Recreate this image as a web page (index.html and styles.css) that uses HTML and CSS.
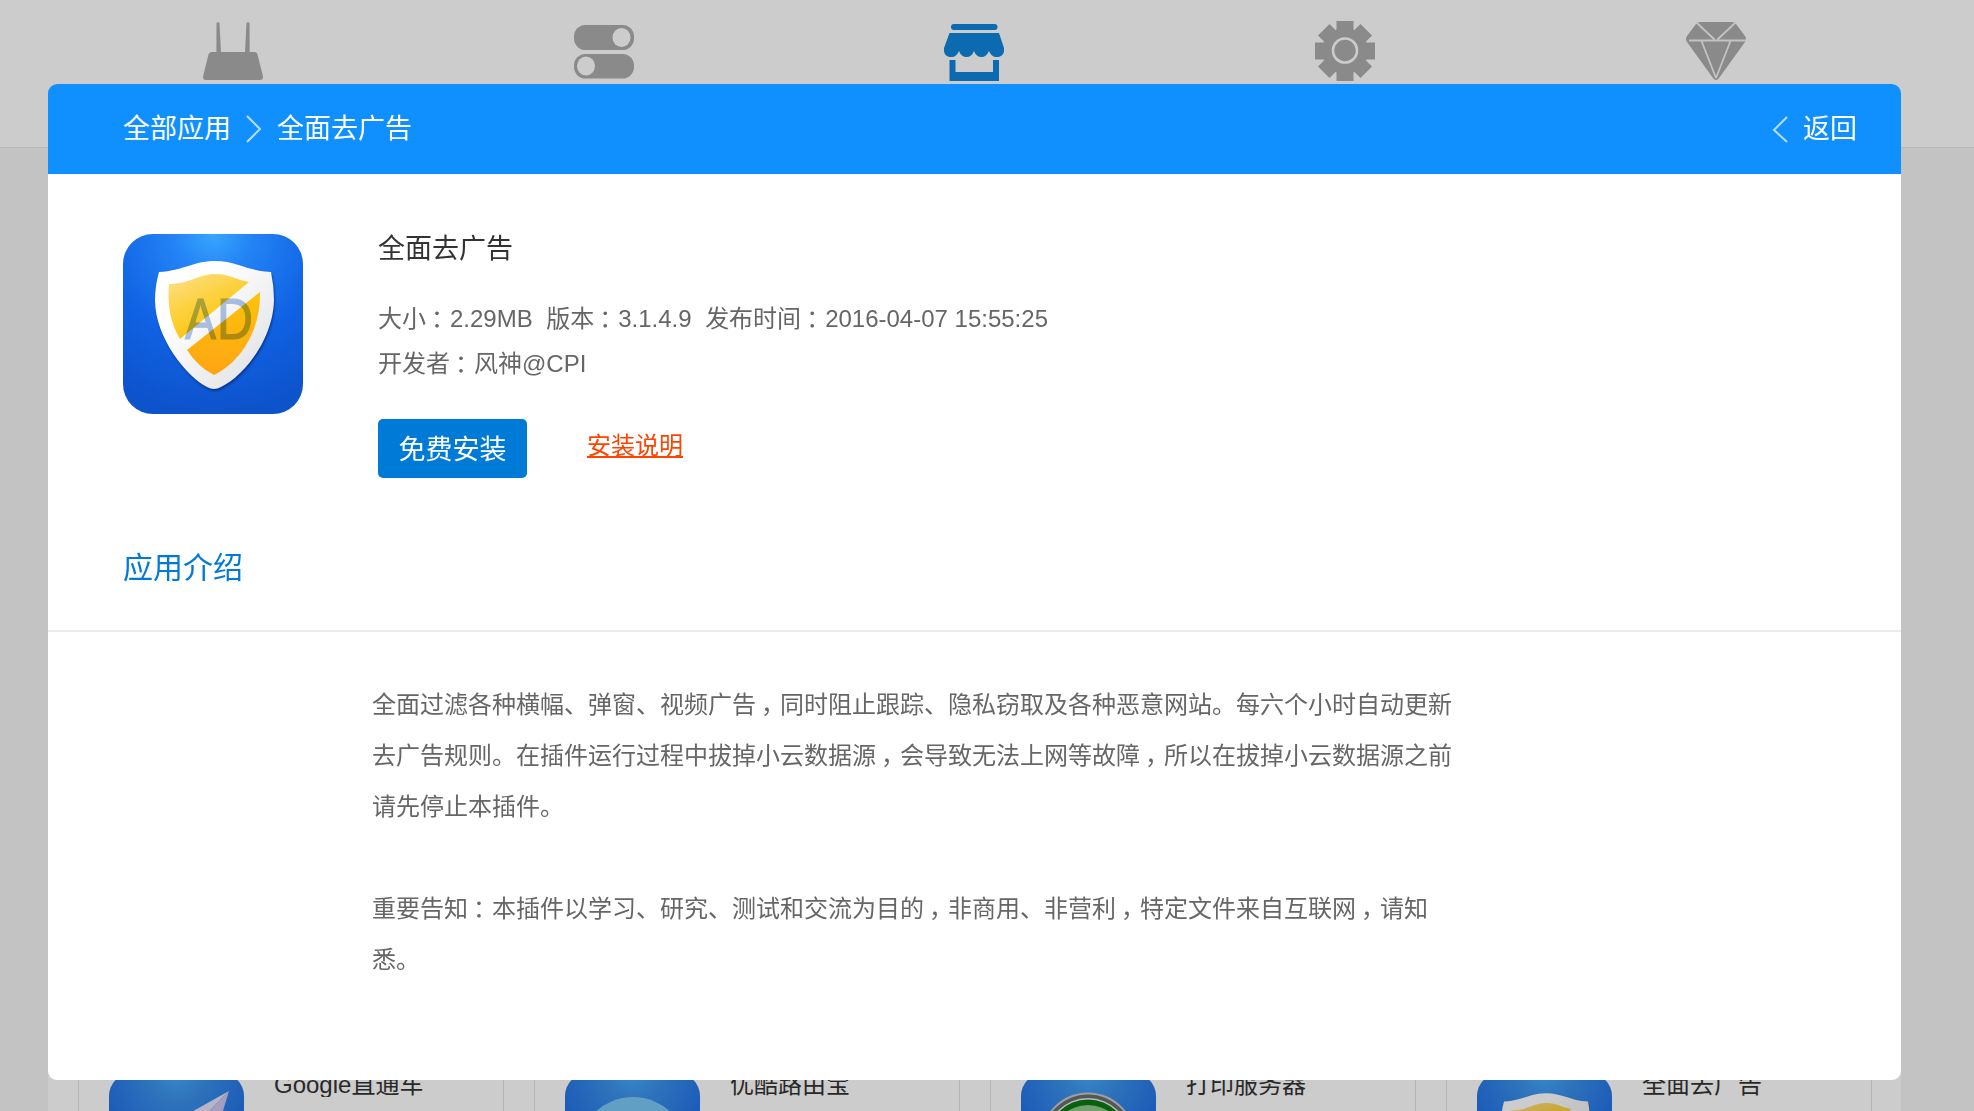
FILE: index.html
```html
<!DOCTYPE html>
<html lang="zh-CN">
<head>
  <meta charset="UTF-8" />
  <title>全面去广告</title>
  <link rel="stylesheet" href="styles.css">
</head>
<body>
  <svg width="0" height="0" class="defs">
    <defs>
      <radialGradient id="bg" cx="0.5" cy="0" r="1">
        <stop offset="0" stop-color="#38a6ff" />
        <stop offset="0.22" stop-color="#2383f5" />
        <stop offset="0.6" stop-color="#1062e4" />
        <stop offset="1" stop-color="#0d53cb" />
      </radialGradient>
      <radialGradient id="bg2" cx="0.5" cy="0" r="0.7">
        <stop offset="0" stop-color="#43aaff" />
        <stop offset="0.3" stop-color="#3b90ea" />
        <stop offset="1" stop-color="#1a68e6" />
      </radialGradient>
      <linearGradient id="white" x1="0" y1="0" x2="1" y2="1">
        <stop offset="0.3" stop-color="#fff" />
        <stop offset="1" stop-color="#dcdde0" />
      </linearGradient>
      <linearGradient id="gold1" x1="0" y1="0" x2="0.6" y2="1">
        <stop offset="0" stop-color="#fee08c" />
        <stop offset="0.5" stop-color="#fcd13c" />
        <stop offset="1" stop-color="#fcc000" />
      </linearGradient>
      <linearGradient id="gold2" x1="0" y1="0" x2="0" y2="1">
        <stop offset="0" stop-color="#fcc40a" />
        <stop offset="1" stop-color="#ffa414" />
      </linearGradient>
      <g id="shield">
        <path class="shield-edge" d="M36 38C60 37 70 27 92 27C114 27 124 37 148 38Q151 52 151 66C150 108 118 144 98 153Q91 157 84 153C64 143 32 104 32 66Q32 52 36 38Z" fill="url(#white)" />
        <path d="M46 50C66 50 76 40 92 40C107 40 113 46 126 48L57 105Q43 82 46 50Z" fill="url(#gold1)" />
        <path d="M137 58C138 98 116 129 91 141Q75 133 64 116Z" fill="url(#gold2)" />
      </g>
    </defs>
  </svg>

  <!-- 顶部导航 -->
  <div class="nav">
    <div class="nav-list">
      <a class="nav-item">
        <svg viewBox="0 0 60 60">
          <path d="M13.5 1.5h3L18 32h-4.600zM43.500 1.500h3L46.700 32h-4.700z" />
          <path d="M8.500 31h43q2.500 0 3 2.500l5.500 22q0 3.500-3 3.500H3q-3 0-3-3.500l5.500-22q.5-2.500 3-2.500z" />
        </svg>
      </a>
      <a class="nav-item">
        <svg viewBox="0 0 60 60">
          <rect x="0" y="4" width="60" height="25" rx="11.500" />
          <rect x="0" y="33" width="60" height="24.500" rx="11.500" />
          <ellipse class="hole" cx="47.500" cy="16.500" rx="9" ry="9.500" />
          <ellipse class="hole" cx="12" cy="45" rx="9" ry="9.500" />
        </svg>
      </a>
      <a class="nav-item active">
        <svg viewBox="0 0 60 60">
          <rect x="7" y="3" width="46.500" height="6" rx="3" />
          <path d="M5.500 12h49.500l5 15c1 6-3 9-7 9s-6-2-8-6c-2 4-4 6-7.500 6s-6-2-7.500-6c-1.500 4-4 6-7.500 6s-6-2-7.500-6c-2 4-4 6-8 6s-8-3-7-9z" />
          <path d="M5.500 39h6v12H49V39h6v21H5.500z" />
        </svg>
      </a>
      <a class="nav-item">
        <svg viewBox="0 0 60 60">
          <circle cx="30" cy="30" r="23" />
          <path d="M21.500 0h17v60h-17zM0 21.500h60v17H0z" />
          <path d="M14.500 3L57 45.500 45.500 57 3 14.500zM45.500 3L57 14.500 14.500 57 3 45.500z" />
          <circle class="ring" cx="30" cy="29.500" r="12" />
        </svg>
      </a>
      <a class="nav-item">
        <svg viewBox="0 0 60 60">
          <path d="M14 1h32q2 0 4 2l9 12q2 3 0 6L33 57q-3 4-6 0L1 21q-2-3 0-6L10 3q2-2 4-2z" />
          <path class="cut" d="M11 2l17.500 16.500M49 2L31.500 18.500M3 19.500h57M15.500 20L30 57M44.500 20L30 57" />
        </svg>
      </a>
    </div>
  </div>

  <!-- 应用列表 -->
  <div class="main">
    <div class="card">
      <svg class="card-icon" viewBox="0 0 135 135">
        <rect width="135" height="135" rx="23" fill="url(#bg2)" />
        <path d="M120 18L22 73l34 10z" fill="#e7e2fa" />
        <path d="M120 18L56 83l38 20z" fill="#cfc6f2" />
      </svg>
      <div class="card-name">Google直通车</div>
    </div>
    <div class="card">
      <svg class="card-icon" viewBox="0 0 135 135">
        <rect width="135" height="135" rx="23" fill="url(#bg2)" />
        <circle cx="68" cy="79" r="55" fill="#7ac9f5" />
      </svg>
      <div class="card-name">优酷路由宝</div>
    </div>
    <div class="card">
      <svg class="card-icon" viewBox="0 0 135 135">
        <rect width="135" height="135" rx="23" fill="url(#bg2)" />
        <circle cx="67" cy="67" r="47.500" fill="#c4c8cc" />
        <circle cx="67" cy="67" r="45.500" fill="#6c6c6c" />
        <circle cx="67" cy="67" r="42" fill="#e8eee8" />
        <circle cx="67" cy="67" r="40.500" fill="#0b7a12" />
        <ellipse cx="67" cy="67" rx="36" ry="35" fill="#8fc88a" />
      </svg>
      <div class="card-name">打印服务器</div>
    </div>
    <div class="card">
      <svg class="card-icon" viewBox="0 0 180 180">
        <rect width="180" height="180" rx="31" fill="url(#bg2)" />
        <use href="#shield" />
      </svg>
      <div class="card-name">全面去广告</div>
    </div>
  </div>

  <!-- 应用详情弹层 -->
  <div class="mask">
    <div class="dialog">
      <div class="dialog-head">
        <div class="crumb">
          <span>全部应用</span>
          <svg class="arrow" viewBox="0 0 16 28"><path d="M1 1l13 13L1 27" /></svg>
          <span>全面去广告</span>
        </div>
        <div class="back">
          <svg class="arrow" viewBox="0 0 16 28"><path d="M15 2L2 15l13 12" /></svg>
          <span>返回</span>
        </div>
      </div>

      <div class="app">
        <svg class="app-icon" viewBox="0 0 180 180">
          <rect width="180" height="180" rx="30" fill="url(#bg)" />
          <use href="#shield" />
          <g class="ad">
            <text x="62" y="105" textLength="31" lengthAdjust="spacingAndGlyphs">A</text>
            <text x="94" y="105" textLength="36" lengthAdjust="spacingAndGlyphs">D</text>
          </g>
        </svg>
        <div class="app-info">
          <h2>全面去广告</h2>
          <p class="meta">
            <span>大小<i>：</i>2.29MB</span>
            <span>版本<i>：</i>3.1.4.9</span>
            <span>发布时间<i>：</i>2016-04-07 15:55:25</span>
          </p>
          <p class="meta"><span>开发者<i>：</i>风神@CPI</span></p>
          <div class="actions">
            <button class="install-btn">免费安装</button>
            <a class="help" href="#">安装说明</a>
          </div>
        </div>
      </div>

      <h3 class="intro-title">应用介绍</h3>
      <div class="intro">
        <p>全面过滤各种横幅、弹窗、视频广告<i>，</i>同时阻止跟踪、隐私窃取及各种恶意网站。每六个小时自动更新去广告规则。在插件运行过程中拔掉小云数据源<i>，</i>会导致无法上网等故障<i>，</i>所以在拔掉小云数据源之前请先停止本插件。</p>
        <p>重要告知<i>：</i>本插件以学习、研究、测试和交流为目的<i>，</i>非商用、非营利<i>，</i>特定文件来自互联网<i>，</i>请知悉。</p>
      </div>
    </div>
  </div>
</body>
</html>
```
FILE: styles.css
```css
* {
  box-sizing: border-box;
  margin: 0;
  padding: 0;
}

body {
  font-family: "Liberation Sans", "Noto Sans CJK SC", sans-serif;
  font-size: 24px;
  color: #666;
  background: #f4f4f4;
  height: 1111px;
  overflow: hidden;
}

svg {
  display: block;
  flex: none;
}

.defs {
  position: absolute;
}

/* 全角标点居中 */
i {
  font-style: normal;
  font-feature-settings: "halt";
  padding: 0 7px 0 5px;
}

/* 顶部导航 */
.nav {
  height: 148px;
  background: #fff;
  border-bottom: 1px solid #e6e6e6;
}

.nav-list {
  display: flex;
  width: 1853px;
  margin: 0 0 0 48px;
  padding-top: 21px;
}

.nav-item {
  flex: 1;
  display: flex;
  justify-content: center;
}

.nav-item svg {
  width: 60px;
  height: 60px;
  fill: #adadad;
}

.nav-item.active svg {
  fill: #0f85dc;
}

.nav-item .hole {
  fill: #fff;
}

.nav-item .ring {
  fill: none;
  stroke: #fff;
  stroke-width: 2.6;
}

.nav-item .cut {
  fill: none;
  stroke: #f4f4f4;
  stroke-width: 1.8;
}

/* 应用列表 */
.main {
  display: flex;
  gap: 30px;
  width: 1853px;
  height: 963px;
  margin-left: 48px;
  padding: 889px 30px 0;
  background: #fff;
  overflow: hidden;
}

.card {
  flex: none;
  display: flex;
  gap: 30px;
  width: 426px;
  height: 200px;
  padding: 35px 30px;
  border: 1px solid #e4e4e4;
}

.card-icon {
  width: 135px;
  height: 135px;
}

.card-name {
  height: 24px;
  line-height: 24px;
  color: #333;
  overflow: hidden;
}

/* 弹层 */
.mask {
  position: fixed;
  inset: 0;
  padding: 84px 73px 31px 48px;
  background: rgba(0, 0, 0, 0.2);
}

.dialog {
  height: 996px;
  background: #fff;
  border-radius: 9px;
  overflow: hidden;
}

.dialog-head {
  display: flex;
  justify-content: space-between;
  height: 90px;
  padding: 0 44px 0 75px;
  background: #1090ff;
  color: #fff;
  font-size: 27px;
  line-height: 90px;
}

.crumb,
.back {
  display: flex;
  align-items: center;
}

.crumb .arrow {
  margin: 0 15px 0 15px;
}

.back .arrow {
  margin-right: 15px;
}

.arrow {
  width: 16px;
  height: 28px;
  fill: none;
  stroke: #b5dcff;
  stroke-width: 2;
}

.app {
  display: flex;
  gap: 75px;
  padding: 60px 75px 0;
}

.app-icon {
  width: 180px;
  height: 180px;
}

.shield-edge {
  filter: drop-shadow(1px 2px 1px rgba(0, 20, 80, 0.5));
}

.ad {
  font-size: 57px;
  fill: #adc4e6;
  stroke: #adc4e6;
  stroke-width: 1.2;
  mix-blend-mode: multiply;
}

h2 {
  height: 62px;
  padding-top: 1px;
  font-size: 27px;
  font-weight: normal;
  line-height: 28px;
  color: #333;
}

.meta {
  display: flex;
  gap: 13.5px;
  line-height: 45px;
}

.actions {
  display: flex;
  align-items: flex-start;
  gap: 60px;
  margin-top: 33px;
}

.install-btn {
  width: 149px;
  height: 59px;
  padding-top: 3px;
  border: none;
  border-radius: 5px;
  background: #007ad7;
  color: #fff;
  font-family: inherit;
  font-size: 27px;
  line-height: 56px;
}

.help {
  color: #ff4400;
  line-height: 54px;
}

.intro-title {
  height: 154px;
  padding: 60px 75px 0;
  border-bottom: 2px solid #ebebeb;
  font-size: 30px;
  font-weight: normal;
  line-height: 60px;
  color: #007ad7;
}

.intro {
  width: 1414px;
  padding: 47px 0 0 324px;
  line-height: 51px;
}

.intro p {
  margin-bottom: 51px;
}
```
